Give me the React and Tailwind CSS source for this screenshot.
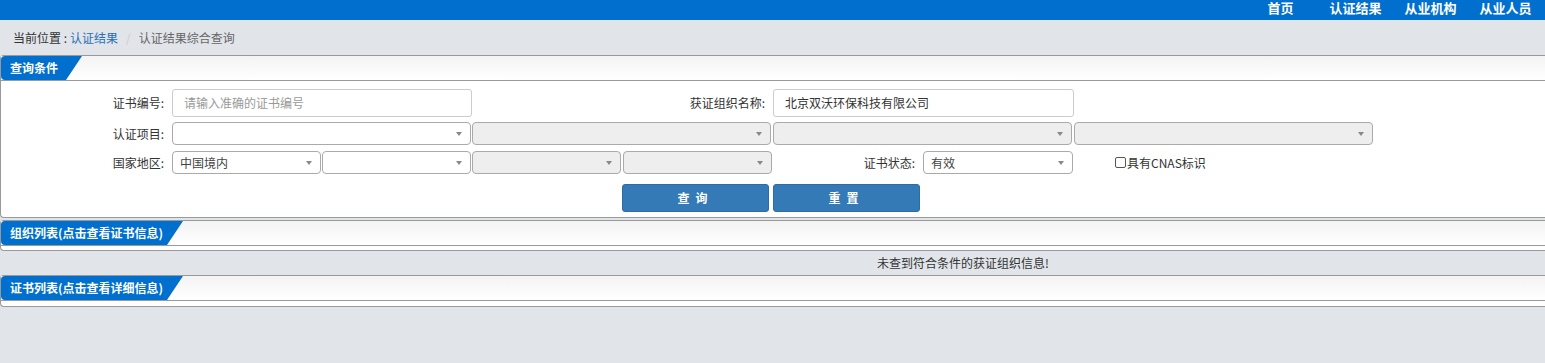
const font = { fontFamily: '"Noto Sans CJK SC", "Liberation Sans", sans-serif' };

function Arrow() {
  return (
    <span className="w-0 h-0 border-l-[3px] border-r-[3px] border-t-[4px] border-l-transparent border-r-transparent border-t-[#888]" />
  );
}

function Select({ width, value, disabled, className = "" }) {
  return (
    <div
      className={`h-[23px] flex items-center justify-between pl-[7px] pr-[8px] border border-[#aaa] rounded-[4px] text-[12px] text-[#444] ${
        disabled ? "bg-[#eee]" : "bg-white"
      } ${width} ${className}`}
    >
      <span>{value}</span>
      <Arrow />
    </div>
  );
}

function PanelHeader({ title, tabWidth }) {
  return (
    <div className="h-[25px] border-b border-[#999] bg-gradient-to-b from-[#f3f3f3] to-white flex">
      <div
        className={`h-full bg-[#006fcd] rounded-tl-[4px] rounded-bl-[4px] text-white text-[12px] font-bold flex items-center pl-[9px] [clip-path:polygon(0_0,100%_0,calc(100%-16px)_100%,0_100%)] ${tabWidth}`}
      >
        {title}
      </div>
    </div>
  );
}

function Label({ width, children }) {
  return (
    <div className={`text-right pr-[8px] text-[12px] text-[#333] ${width}`}>{children}</div>
  );
}

export default function App() {
  return (
    <div className="min-h-screen bg-[#e1e5ea] overflow-hidden" style={font}>
      <div className="h-[20px] bg-[#006fcd] flex justify-end pr-[2px]">
        {["首页", "认证结果", "从业机构", "从业人员"].map((t) => (
          <div key={t} className="w-[75px] text-center text-white text-[13px] font-bold leading-[16px]">
            {t}
          </div>
        ))}
      </div>

      <div className="h-[35px] flex items-center pl-[13px] text-[12px]">
        <span className="text-[#333]">当前位置 : </span>
        <span className="text-[#2a6fb6] ml-[3px]">认证结果</span>
        <span className="text-[#ccc] mx-[8px]">/</span>
        <span className="text-[#666]">认证结果综合查询</span>
      </div>

      <div className="bg-white border-y border-l border-[#999] rounded-l-[4px]">
        <PanelHeader title="查询条件" tabWidth="w-[81px]" />
        <div className="pt-[8px] pb-[5px]">
          <div className="flex items-center">
            <Label width="w-[171px]">证书编号:</Label>
            <div className="w-[300px] h-[28px] border border-[#ccc] rounded-[3px] flex items-center pl-[11px] text-[12px] text-[#999]">
              请输入准确的证书编号
            </div>
            <Label width="w-[301px]">获证组织名称:</Label>
            <div className="w-[301px] h-[28px] border border-[#ccc] rounded-[3px] flex items-center pl-[11px] text-[12px] text-[#333]">
              北京双沃环保科技有限公司
            </div>
          </div>

          <div className="flex items-center mt-[5px]">
            <Label width="w-[171px]">认证项目:</Label>
            <Select width="w-[299px]" />
            <Select width="w-[299px]" disabled className="ml-[1px]" />
            <Select width="w-[299px]" disabled className="ml-[2px]" />
            <Select width="w-[299px]" disabled className="ml-[2px]" />
          </div>

          <div className="flex items-center mt-[6px]">
            <Label width="w-[171px]">国家地区:</Label>
            <Select width="w-[149px]" value="中国境内" />
            <Select width="w-[149px]" className="ml-[1px]" />
            <Select width="w-[149px]" disabled className="ml-[1px]" />
            <Select width="w-[149px]" disabled className="ml-[2px]" />
            <Label width="w-[151px]">证书状态:</Label>
            <Select width="w-[150px]" value="有效" />
            <div className="ml-[42px] flex items-center text-[12px] text-[#333]">
              <span className="w-[11px] h-[11px] border border-[#555] rounded-[2px] mr-[1px]" />
              具有CNAS标识
            </div>
          </div>

          <div className="flex mt-[10px] ml-[621px] gap-[4px]">
            <button className="w-[147px] h-[28px] bg-[#337ab7] border border-[#2e6da4] rounded-[3px] text-white text-[12px] font-bold tracking-[6px]">
              查询
            </button>
            <button className="w-[147px] h-[28px] bg-[#337ab7] border border-[#2e6da4] rounded-[3px] text-white text-[12px] font-bold tracking-[6px]">
              重置
            </button>
          </div>
        </div>
      </div>

      <div className="mt-[2px] bg-white border-y border-l border-[#999] rounded-l-[4px]">
        <PanelHeader title="组织列表(点击查看证书信息)" tabWidth="w-[182px]" />
        <div className="h-[4px]" />
      </div>
      <div className="h-[24px] flex items-center pl-[877px] text-[12px] text-[#333]">
        未查到符合条件的获证组织信息!
      </div>

      <div className="bg-white border-y border-l border-[#999] rounded-l-[4px]">
        <PanelHeader title="证书列表(点击查看详细信息)" tabWidth="w-[182px]" />
        <div className="h-[5px]" />
      </div>
    </div>
  );
}
